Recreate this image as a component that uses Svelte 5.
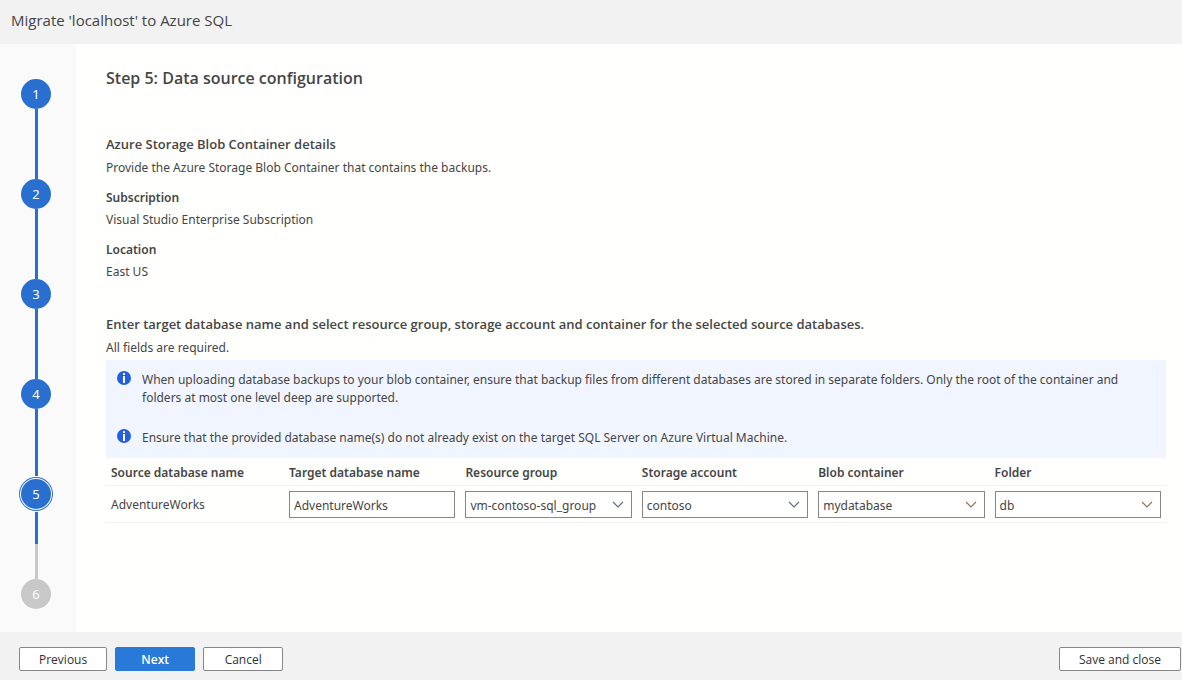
<script>
  const steps = [1, 2, 3, 4, 5, 6];
  const current = 5;
  const notes = [
    'When uploading database backups to your blob container, ensure that backup files from different databases are stored in separate folders. Only the root of the container and folders at most one level deep are supported.',
    'Ensure that the provided database name(s) do not already exist on the target SQL Server on Azure Virtual Machine.'
  ];
  const dropdowns = [
    { label: 'Resource group', value: 'vm-contoso-sql_group', tone: 'cool' },
    { label: 'Storage account', value: 'contoso', tone: 'cool' },
    { label: 'Blob container', value: 'mydatabase', tone: 'warm' },
    { label: 'Folder', value: 'db', tone: 'warm' }
  ];
  let target = $state('AdventureWorks');
</script>

<div class="wizard">
  <header>Migrate 'localhost' to Azure SQL</header>

  <div class="body">
    <nav aria-label="Wizard steps">
      <ol>
        {#each steps as n}
          <li class:current={n === current} class:todo={n > current}>
            <button class="step" type="button" aria-current={n === current ? 'step' : undefined}>{n}</button>
          </li>
        {/each}
      </ol>
    </nav>

    <main>
      <h1>Step 5: Data source configuration</h1>

      <section class="details">
        <h2>Azure Storage Blob Container details</h2>
        <p>Provide the Azure Storage Blob Container that contains the backups.</p>
        <dl>
          <dt>Subscription</dt>
          <dd>Visual Studio Enterprise Subscription</dd>
          <dt>Location</dt>
          <dd>East US</dd>
        </dl>
      </section>

      <section>
        <h2>Enter target database name and select resource group, storage account and container for the selected source databases.</h2>
        <p>All fields are required.</p>

        <div class="notes">
          {#each notes as note}
            <div class="note">
              <svg width="14" height="14" viewBox="0 0 14 14" aria-hidden="true">
                <circle cx="7" cy="7" r="7" fill="#235fe0" />
                <path d="M6 2h2v2H6zM6 5h2v7H6z" fill="#fff" />
              </svg>
              <span>{note}</span>
            </div>
          {/each}
        </div>

        <table>
          <thead>
            <tr>
              <th scope="col" class="source">Source database name</th>
              <th scope="col" id="target-name">Target database name</th>
              {#each dropdowns as d, i}
                <th scope="col" id="column-{i}">{d.label}</th>
              {/each}
            </tr>
          </thead>
          <tbody>
            <tr>
              <td>AdventureWorks</td>
              <td><input type="text" aria-labelledby="target-name" bind:value={target} /></td>
              {#each dropdowns as d, i}
                <td>
                  <div class="dropdown">
                    <select aria-labelledby="column-{i}"><option>{d.value}</option></select>
                    <svg class={d.tone} width="12" height="7" viewBox="0 0 12 7" aria-hidden="true">
                      <path d="M1 1l5 5 5-5" fill="none" stroke="currentColor" stroke-width="1.2" />
                    </svg>
                  </div>
                </td>
              {/each}
            </tr>
          </tbody>
        </table>
      </section>
    </main>
  </div>

  <footer>
    <button class="action wide" type="button">Previous</button>
    <button class="action primary" type="button">Next</button>
    <button class="action" type="button">Cancel</button>
    <button class="action last" type="button">Save and close</button>
  </footer>
</div>

<style>
  :global(body) {
    margin: 0;
  }
  .wizard {
    display: flex;
    flex-direction: column;
    min-height: 100vh;
    background: #fffffe;
    color: #454545;
    font: 12px/18px 'Noto Sans', 'Open Sans', sans-serif;
  }
  * {
    box-sizing: border-box;
  }
  header {
    padding: 10px 11px 14px;
    background: #f2f2f2;
    font-family: 'Open Sans', 'Noto Sans', sans-serif;
    font-size: 15px;
    line-height: 20px;
  }
  .body {
    display: flex;
    flex: 1;
  }
  nav {
    flex: none;
    width: 76px;
    padding: 35px 21px 0;
    background: #fafafa;
  }
  ol {
    display: flex;
    flex-direction: column;
    gap: 70px;
    margin: 0;
    padding: 0;
    list-style: none;
  }
  li {
    position: relative;
    height: 30px;
  }
  li:not(:last-child)::after {
    content: '';
    position: absolute;
    left: 14px;
    top: 30px;
    width: 3px;
    height: 70px;
    background: #286fd0;
  }
  li.current::after {
    background: linear-gradient(#286fd0 50%, #c8c8c8 50%) !important;
  }
  .step {
    position: relative;
    z-index: 1;
    display: block;
    width: 30px;
    height: 30px;
    padding: 0;
    border: 0;
    border-radius: 50%;
    background: #286fd0;
    color: #fff;
    font: inherit;
    font-size: 13px;
    line-height: 30px;
    text-align: center;
  }
  .current .step {
    box-shadow: 0 0 0 1px #fff, 0 0 0 2px #286fd0, 0 0 0 3px #fff;
  }
  .todo .step {
    background: #c8c8c8;
  }
  main {
    flex: 1;
    min-width: 0;
    padding: 24px 16px 24px 30px;
  }
  h1 {
    margin: 0 0 46px;
    font-family: 'Open Sans', 'Noto Sans', sans-serif;
    font-size: 16px;
    line-height: 20px;
    font-weight: 600;
  }
  h2 {
    margin: 0 0 5px;
    font-family: 'Open Sans', 'Noto Sans', sans-serif;
    font-size: 13px;
    line-height: 20px;
    font-weight: 600;
  }
  p {
    margin: 0 0 3px;
  }
  dl {
    margin: 0;
  }
  dt {
    padding-top: 9px;
    font-weight: 600;
    line-height: 18px;
  }
  dd {
    margin: 4px 0 3px;
  }
  .details {
    margin-bottom: 33px;
  }
  .notes {
    display: flex;
    flex-direction: column;
    gap: 22px;
    padding: 11px;
    background: #f1f5ff;
  }
  .note {
    display: flex;
    align-items: flex-start;
    gap: 11px;
  }
  .note svg {
    flex: none;
  }
  table {
    width: 100%;
    table-layout: fixed;
    border-collapse: collapse;
  }
  th,
  td {
    padding: 5px 5px 4px;
    border-bottom: 1px solid #efefef;
    text-align: left;
    font-weight: 400;
  }
  th {
    padding: 6px 5px 3px;
    font-weight: 600;
  }
  .source {
    width: 178px;
  }
  input,
  select {
    display: block;
    width: 100%;
    height: 27px;
    padding: 2px 4px 0;
    border: 1px solid #868686;
    border-radius: 0;
    background: #fff;
    color: inherit;
    font: inherit;
    appearance: none;
  }
  .dropdown {
    display: grid;
    align-items: center;
  }
  .dropdown > * {
    grid-area: 1 / 1;
  }
  .dropdown svg {
    justify-self: end;
    margin-right: 8px;
    pointer-events: none;
  }
  .cool {
    color: #626a80;
  }
  .warm {
    color: #94705a;
  }
  footer {
    display: flex;
    gap: 8px;
    padding: 15px 1px 9px 19px;
    background: #f2f2f2;
  }
  .action {
    min-width: 80px;
    height: 24px;
    padding: 1px 19px 0;
    border: 1px solid #868686;
    border-radius: 2px;
    background: #fff;
    color: #303030;
    font: 500 12px/20px 'Open Sans', 'Noto Sans', sans-serif;
  }
  .wide {
    min-width: 88px;
  }
  .primary {
    border-color: #2979d8;
    background: #2979d8;
    color: #fff;
    font-weight: 600;
  }
  .last {
    margin-left: auto;
  }
</style>
